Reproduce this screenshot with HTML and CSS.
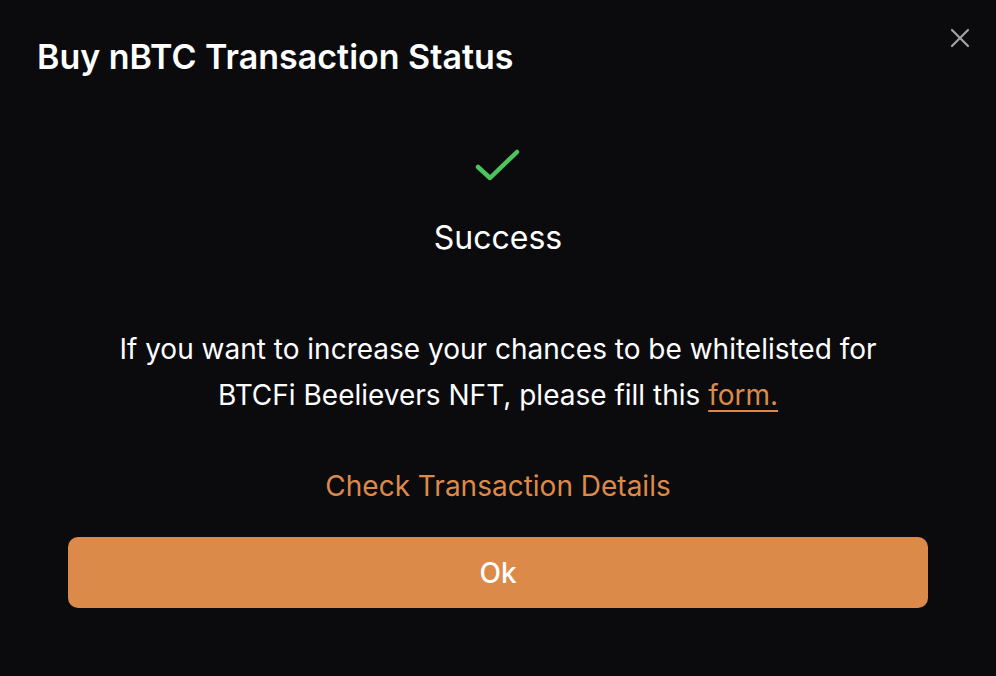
FILE: index.html
```html
<!DOCTYPE html>
<html>
<head>
<meta charset="utf-8">
<link rel="stylesheet" href="styles.css">
</head>
<body>
<div class="modal">
  <div class="header">
    <h1 class="title">Buy nBTC Transaction Status</h1>
    <button class="close" aria-label="Close">
      <svg width="20" height="20" viewBox="0 0 20 20"><path d="M2 2 L18 18 M18 2 L2 18" stroke="#a3a3a6" stroke-width="2.2" stroke-linecap="round"/></svg>
    </button>
  </div>
  <div class="status">
    <svg class="check" width="48" height="36" viewBox="0 0 48 36"><path d="M4 19 L16 30 L43 4" fill="none" stroke="#4cc35c" stroke-width="4.5" stroke-linecap="round" stroke-linejoin="round"/></svg>
    <div class="status-text">Success</div>
  </div>
  <p class="message">If you want to increase your chances to be whitelisted for<br>BTCFi Beelievers NFT, please fill this <a class="link" href="#">form.</a></p>
  <a class="details" href="#">Check Transaction Details</a>
  <button class="ok">Ok</button>
</div>
</body>
</html>
```

FILE: styles.css
```css
html, body {
  margin: 0;
  padding: 0;
  background: #0b0b0d;
  width: 996px;
  height: 676px;
  overflow: hidden;
  font-family: Inter, "Noto Sans", sans-serif;
  color: #ffffff;
}
.modal {
  display: flex;
  flex-direction: column;
  align-items: center;
  padding: 0 68px;
}
.header {
  align-self: stretch;
  display: flex;
  justify-content: space-between;
  align-items: flex-start;
  margin: 0 -68px;
  padding: 35px 26px 0 37px;
}
.title {
  margin: 0;
  font-size: 34px;
  font-weight: 600;
  line-height: 44px;
}
.close {
  background: none;
  border: none;
  padding: 0;
  margin-top: -7px;
  cursor: pointer;
  display: flex;
}
.status {
  display: flex;
  flex-direction: column;
  align-items: center;
  margin-top: 69px;
}
.check {
  display: block;
}
.status-text {
  margin-top: 36px;
  font-size: 32px;
  line-height: 36px;
  font-weight: 400;
}
.message {
  margin: 70px 0 0;
  text-align: center;
  font-size: 28px;
  line-height: 46px;
}
.link {
  color: #dc8a4a;
  text-decoration: underline;
  text-underline-offset: 5px;
  text-decoration-thickness: 1.5px;
}
.details {
  margin-top: 50px;
  color: #dc8a4a;
  text-decoration: none;
  font-size: 28px;
  line-height: 36px;
}
.ok {
  margin-top: 33px;
  align-self: stretch;
  height: 71px;
  border: none;
  border-radius: 10px;
  background: #dc8a4a;
  color: #ffffff;
  font-family: Inter, "Noto Sans", sans-serif;
  font-size: 28px;
  font-weight: 500;
}
```
